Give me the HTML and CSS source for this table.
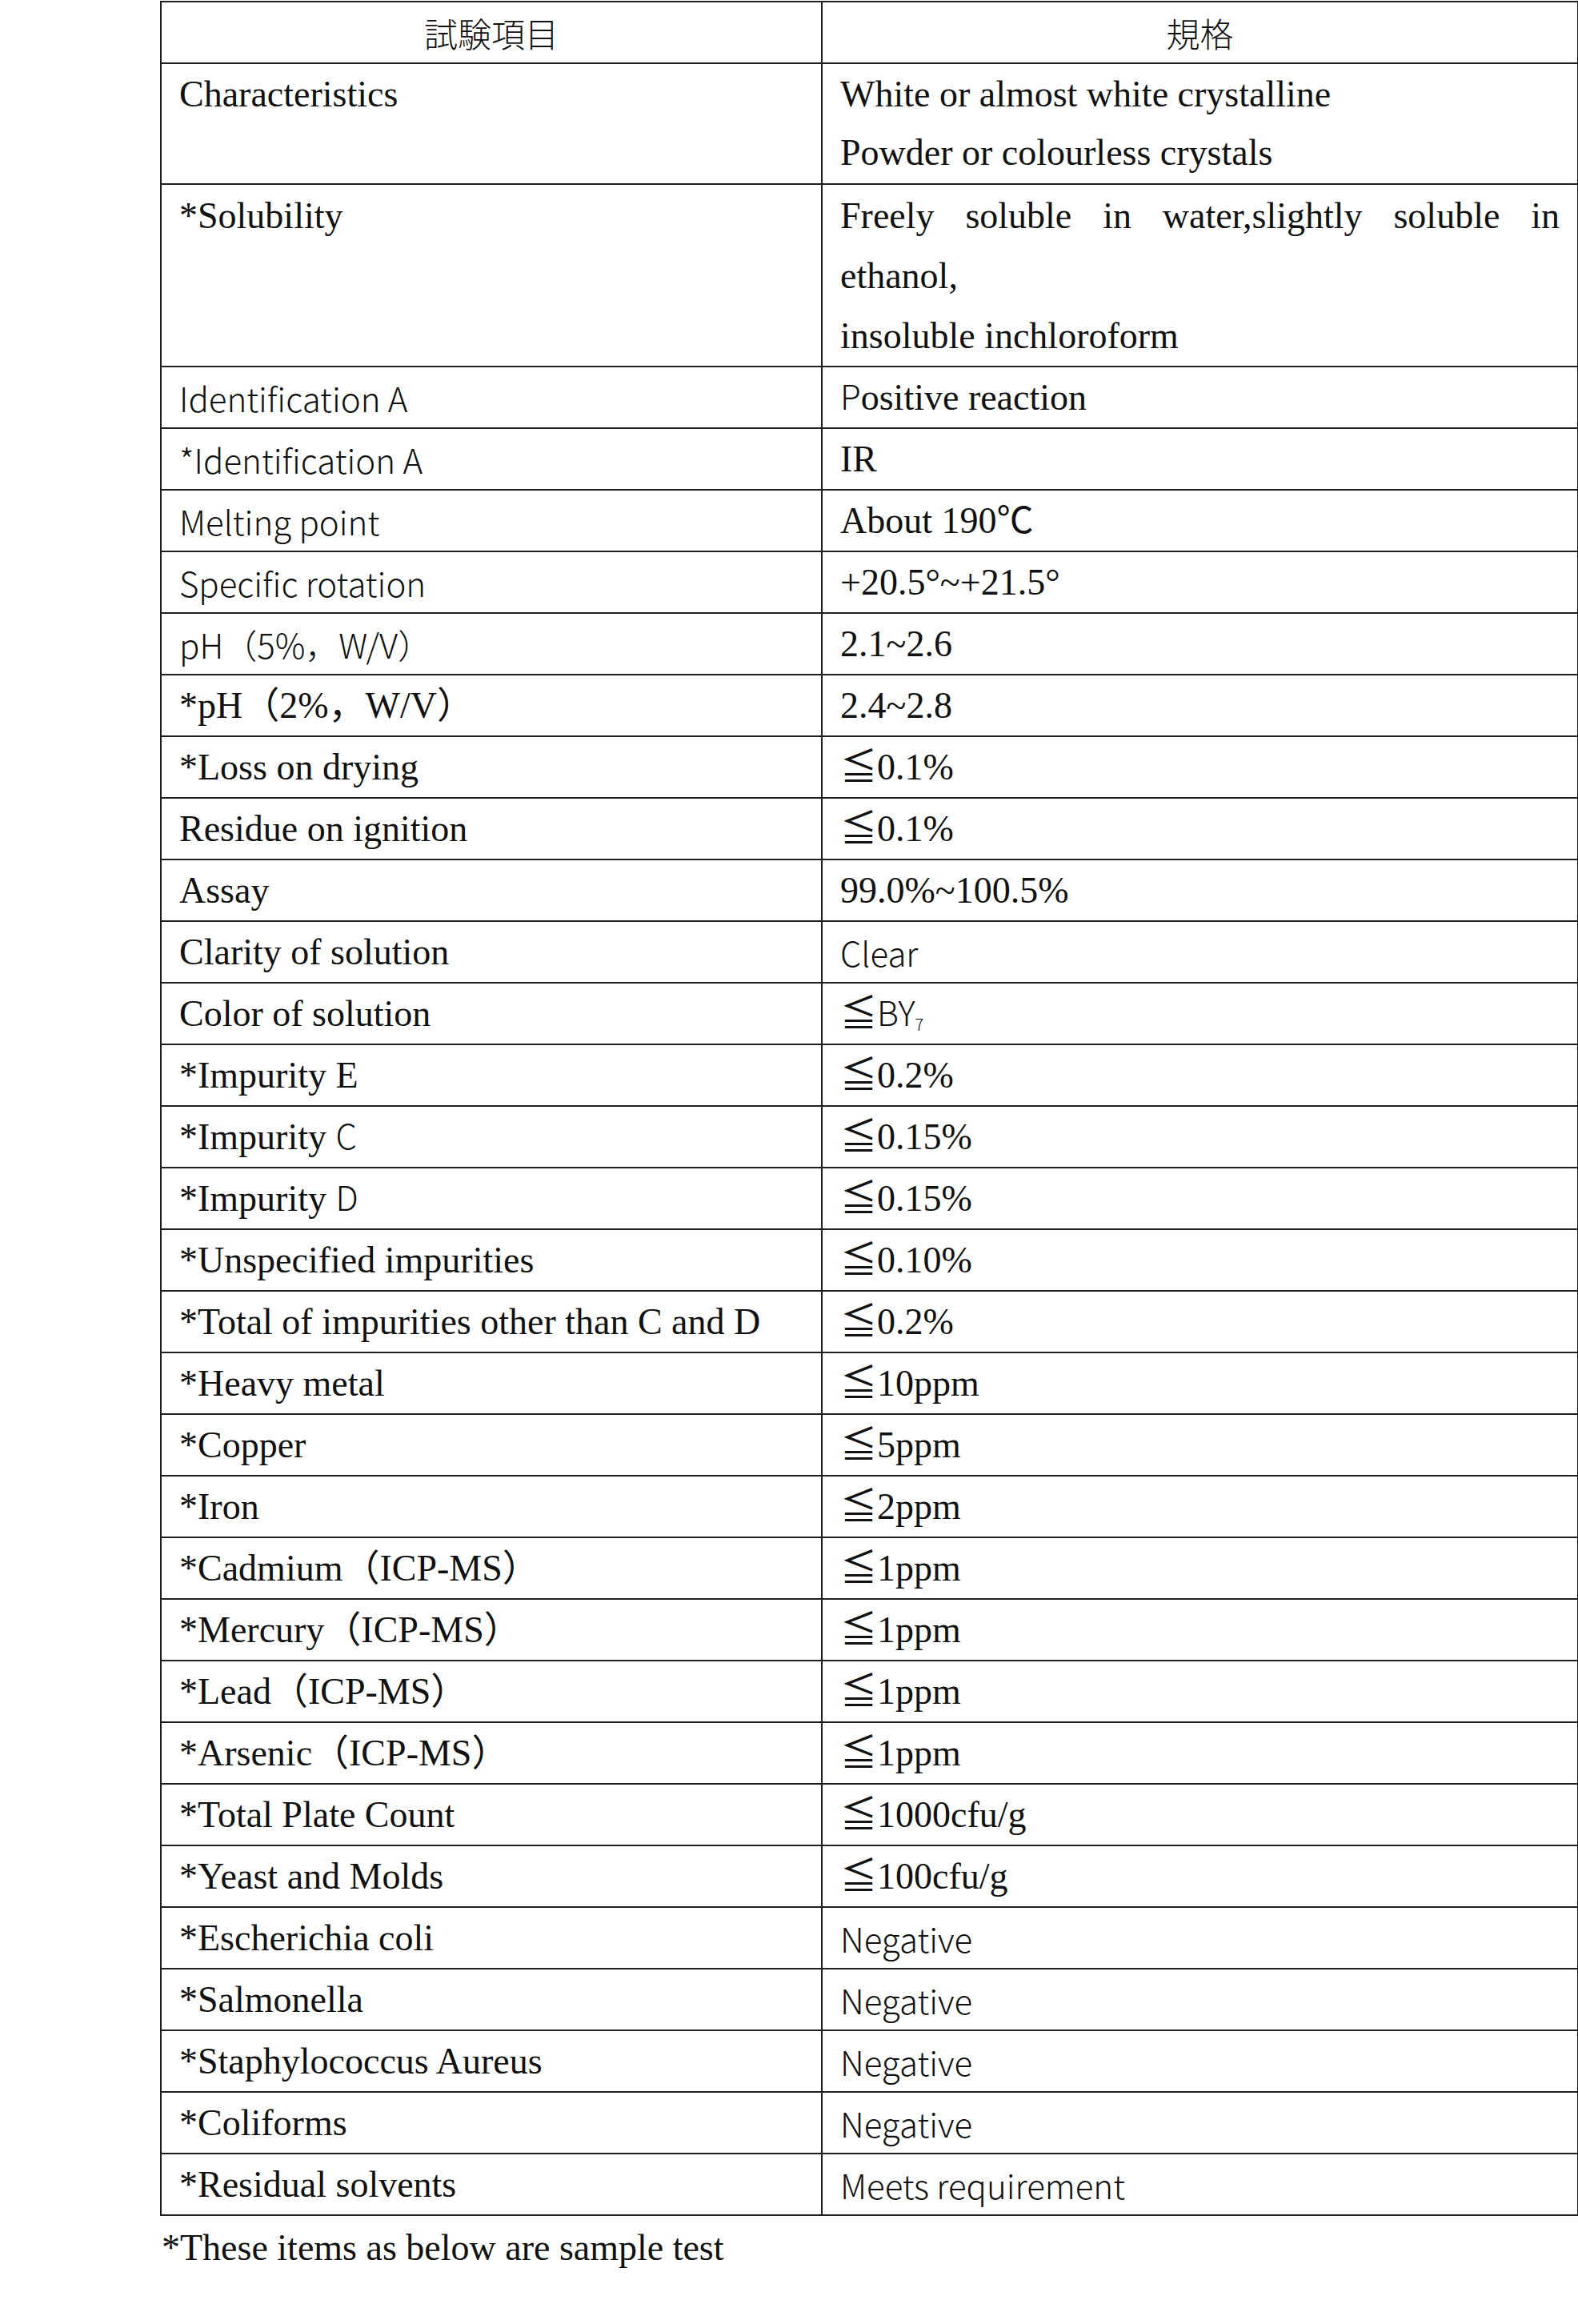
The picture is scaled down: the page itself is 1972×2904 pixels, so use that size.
FILE: index.html
```html
<!DOCTYPE html>
<html lang="ja">
<head>
<meta charset="utf-8">
<title>試験項目</title>
<link rel="stylesheet" href="styles.css">
</head>
<body>
<div class="page">
  <table class="spec">
    <colgroup><col class="c1"><col class="c2"></colgroup>
    <thead>
      <tr><th>試験項目</th><th>規格</th></tr>
    </thead>
    <tbody>
      <tr class="r2"><td>Characteristics</td><td>White or almost white crystalline<br>Powder or colourless crystals</td></tr>
      <tr class="r3"><td>*Solubility</td><td class="just">Freely soluble in water,slightly soluble in ethanol,<br>insoluble inchloroform</td></tr>
      <tr><td class="sans">Identification A</td><td><span class="si">P</span>ositive reaction</td></tr>
      <tr><td class="sans">*Identification A</td><td>IR</td></tr>
      <tr><td class="sans">Melting point</td><td>About 190℃</td></tr>
      <tr><td class="sans">Specific rotation</td><td>+20.5°~+21.5°</td></tr>
      <tr><td class="sans">pH（5%，W/V）</td><td>2.1~2.6</td></tr>
      <tr><td>*pH（2%，W/V）</td><td>2.4~2.8</td></tr>
      <tr><td>*Loss on drying</td><td>≦0.1%</td></tr>
      <tr><td>Residue on ignition</td><td>≦0.1%</td></tr>
      <tr><td>Assay</td><td>99.0%~100.5%</td></tr>
      <tr><td>Clarity of solution</td><td class="sans">Clear</td></tr>
      <tr><td>Color of solution</td><td>≦<span class="si">BY<span class="sub">7</span></span></td></tr>
      <tr><td>*Impurity E</td><td>≦0.2%</td></tr>
      <tr><td>*Impurity <span class="si">C</span></td><td>≦0.15%</td></tr>
      <tr><td>*Impurity <span class="si">D</span></td><td>≦0.15%</td></tr>
      <tr><td>*Unspecified impurities</td><td>≦0.10%</td></tr>
      <tr><td>*Total of impurities other than C and D</td><td>≦0.2%</td></tr>
      <tr><td>*Heavy metal</td><td>≦10ppm</td></tr>
      <tr><td>*Copper</td><td>≦5ppm</td></tr>
      <tr><td>*Iron</td><td>≦2ppm</td></tr>
      <tr><td>*Cadmium（ICP-MS）</td><td>≦1ppm</td></tr>
      <tr><td>*Mercury（ICP-MS）</td><td>≦1ppm</td></tr>
      <tr><td>*Lead（ICP-MS）</td><td>≦1ppm</td></tr>
      <tr><td>*Arsenic（ICP-MS）</td><td>≦1ppm</td></tr>
      <tr><td>*Total Plate Count</td><td>≦1000cfu/g</td></tr>
      <tr><td>*Yeast and Molds</td><td>≦100cfu/g</td></tr>
      <tr><td>*Escherichia coli</td><td class="sans">Negative</td></tr>
      <tr><td>*Salmonella</td><td class="sans">Negative</td></tr>
      <tr><td>*Staphylococcus Aureus</td><td class="sans">Negative</td></tr>
      <tr><td>*Coliforms</td><td class="sans">Negative</td></tr>
      <tr><td>*Residual solvents</td><td class="sans">Meets requirement</td></tr>
    </tbody>
  </table>
  <p class="note">*These items as below are sample test</p>
</div>
</body>
</html>
```

FILE: styles.css
```css
html, body {
  margin: 0;
  padding: 0;
  background: #ffffff;
  color: #111111;
}

.page {
  padding: 1px 0 0 200px;
  font-family: "Liberation Serif", "Noto Sans CJK JP", serif;
}

.spec {
  border-collapse: collapse;
  table-layout: fixed;
  width: 1771px;
}

.spec .c1 { width: 826px; }
.spec .c2 { width: 945px; }

.spec th,
.spec td {
  border: 2px solid #1e1e1e;
  padding: 1px 22px;
  line-height: 73px;
  font-size: 46px;
  vertical-align: top;
  text-align: left;
  font-weight: 400;
}

.spec th {
  font-family: "Noto Sans CJK JP", sans-serif;
  font-size: 42px;
  text-align: center;
  font-weight: 300;
}

.spec .r2 td { padding-bottom: 2px; }
.spec .r3 td {
  line-height: 75px;
  padding-bottom: 0;
}

.spec td.just {
  text-align: justify;
}

.spec td.sans {
  font-family: "Noto Sans CJK SC", sans-serif;
  font-size: 42px;
  font-weight: 300;
}

.si {
  font-family: "Noto Sans CJK SC", sans-serif;
  font-size: 42px;
  font-weight: 300;
  line-height: 40px;
}

.sub {
  font-size: 20px;
  line-height: 0;
  vertical-align: -6px;
}

.note {
  margin: 0;
  padding: 10px 0 0 2px;
  font-size: 46px;
  line-height: 60px;
}
```
